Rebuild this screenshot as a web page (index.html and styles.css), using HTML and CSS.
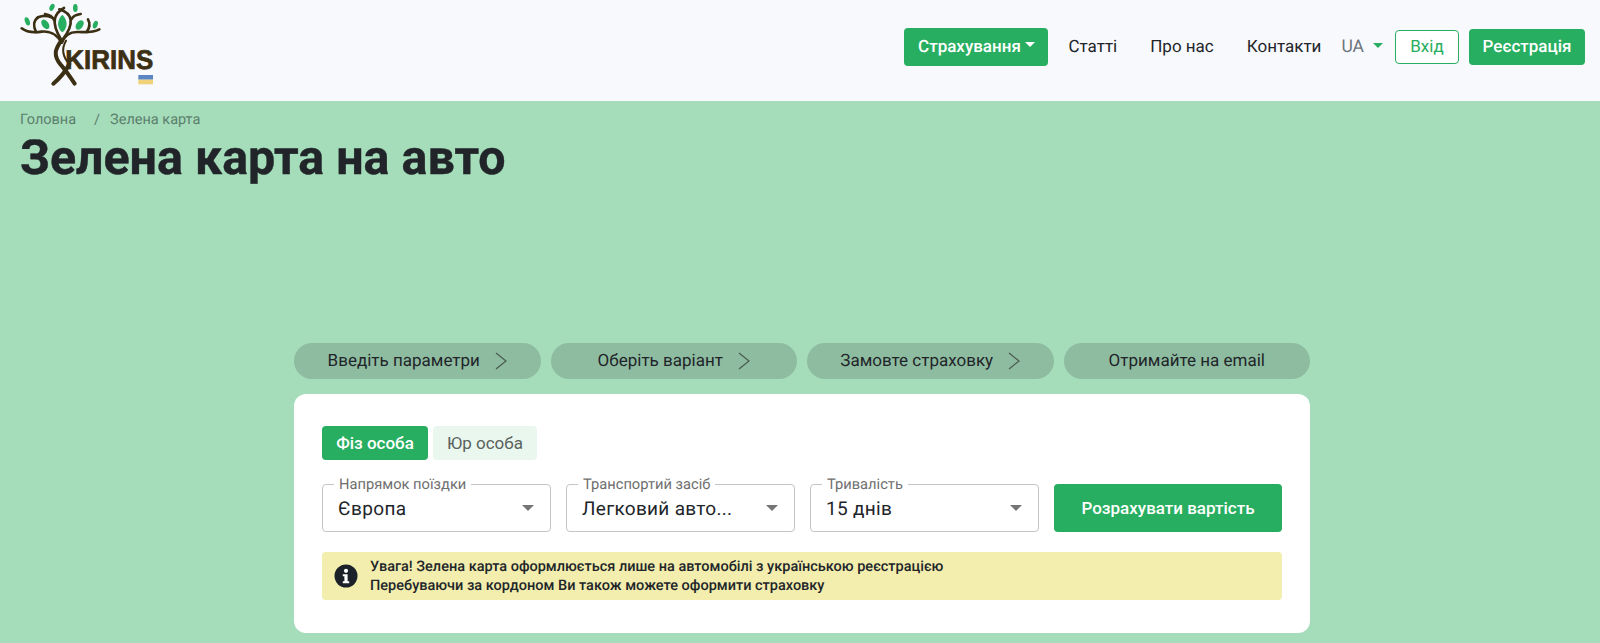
FILE: index.html
```html
<!DOCTYPE html>
<html lang="uk">
<head>
<meta charset="utf-8">
<title>Зелена карта на авто</title>
<link rel="stylesheet" href="styles.css">
</head>
<body>
<header class="site-header">
  <a class="brand" href="#" aria-label="Kirins">
    <svg class="logo" viewBox="0 0 450 285" width="150" height="95">
      <g class="logo-wood">
        <path d="M35 85C50 97 75 98 95 95C115 93 140 100 154 128"/>
        <path d="M268 88C250 98 225 97 205 96C185 95 165 102 156 128"/>
        <path d="M162 24C132 40 122 68 152 116"/>
        <path d="M148 28C188 40 194 70 160 116"/>
        <path d="M105 42C118 44 128 50 132 60"/>
        <path d="M212 42C198 44 188 50 184 58"/>
        <path d="M84 52C70 62 70 80 78 96"/>
        <path d="M234 58C242 72 238 85 230 96"/>
        <path d="M84 52C98 46 112 46 124 52"/>
        <path class="trunk" d="M154 122C134 148 130 168 152 194C168 212 180 230 194 251"/>
        <path class="trunk" d="M178 192C166 216 150 234 130 251"/>
        <path class="thin" d="M168 122C154 146 158 170 178 192"/>
      </g>
      <g class="logo-leaf">
        <path d="M157 44C174 60 174 84 157 97C140 84 140 60 157 44Z"/>
        <ellipse cx="106" cy="73" rx="10" ry="16" transform="rotate(-35 106 73)"/>
        <ellipse cx="209" cy="75" rx="10" ry="16" transform="rotate(35 209 75)"/>
        <ellipse cx="52" cy="64" rx="7" ry="13" transform="rotate(-20 52 64)"/>
        <ellipse cx="256" cy="74" rx="7" ry="12" transform="rotate(20 256 74)"/>
        <ellipse cx="126" cy="22" rx="7" ry="11" transform="rotate(25 126 22)"/>
        <ellipse cx="196" cy="24" rx="7" ry="12"/>
      </g>
      <text class="logo-text" x="166" y="208" textLength="264" lengthAdjust="spacingAndGlyphs">KIRINS</text>
      <rect class="flag-blue" x="385" y="225" width="44" height="14"/>
      <rect class="flag-yellow" x="385" y="239" width="44" height="14"/>
    </svg>
  </a>
  <nav class="nav">
    <a class="btn btn-green btn-menu" href="#">Страхування<span class="caret caret-white"></span></a>
    <a class="nav-link link-articles" href="#">Статті</a>
    <a class="nav-link link-about" href="#">Про нас</a>
    <a class="nav-link link-contacts" href="#">Контакти</a>
    <a class="lang" href="#">UA<span class="caret caret-green"></span></a>
    <a class="btn btn-outline" href="#">Вхід</a>
    <a class="btn btn-green btn-register" href="#">Реєстрація</a>
  </nav>
</header>
<main class="hero">
  <div class="crumbs"><span>Головна</span><span class="crumb-sep">/</span><span>Зелена карта</span></div>
  <h1 class="title">Зелена карта на авто</h1>
  <section class="calc">
    <ol class="steps">
      <li class="step">Введіть параметри<svg class="chev" viewBox="0 0 12 18" width="12" height="18"><path d="M1 1l10 8-10 8"/></svg></li>
      <li class="step">Оберіть варіант<svg class="chev" viewBox="0 0 12 18" width="12" height="18"><path d="M1 1l10 8-10 8"/></svg></li>
      <li class="step">Замовте страховку<svg class="chev" viewBox="0 0 12 18" width="12" height="18"><path d="M1 1l10 8-10 8"/></svg></li>
      <li class="step">Отримайте на email</li>
    </ol>
    <div class="card">
      <div class="tabs">
        <button class="tab tab-active">Фіз особа</button>
        <button class="tab">Юр особа</button>
      </div>
      <div class="form-row">
        <div class="field"><span class="field-label">Напрямок поїздки</span><span class="field-value">Європа</span><span class="field-caret"></span></div>
        <div class="field"><span class="field-label">Транспортий засіб</span><span class="field-value">Легковий авто...</span><span class="field-caret"></span></div>
        <div class="field"><span class="field-label">Тривалість</span><span class="field-value">15 днів</span><span class="field-caret"></span></div>
        <button class="submit">Розрахувати вартість</button>
      </div>
      <div class="notice">
        <svg class="notice-icon" viewBox="0 0 24 24" width="24" height="24"><circle cx="12" cy="12" r="11.5" fill="#1b2029"/><circle cx="12" cy="6.8" r="2.1" fill="#fff"/><path d="M8.8 10.3h4.8v7h1.6v2H8.8v-2h1.6v-5H8.8z" fill="#fff"/></svg>
        <p class="notice-text">Увага! Зелена карта оформлюється лише на автомобілі з українською реєстрацією<br>Перебуваючи за кордоном Ви також можете оформити страховку</p>
      </div>
    </div>
  </section>
</main>
</body>
</html>
```
FILE: styles.css
```css
* { box-sizing: border-box; }
html, body { margin: 0; height: 100%; }
body { background: #a5ddbb; font-family: Roboto, "Liberation Sans", sans-serif; color: #212529; overflow: hidden; text-rendering: geometricPrecision; }
a { text-decoration: none; color: inherit; }

.site-header { height: 101px; background: #f8f9fc; display: flex; justify-content: space-between; padding: 0 15px 0 10px; }
.brand { display: block; height: 95px; }
.logo { display: block; }
.logo-wood path { fill: none; stroke: #3b2f14; stroke-width: 8; stroke-linecap: round; }
.logo-wood .trunk { stroke-width: 12; }
.logo-wood .thin { stroke-width: 6; }
.logo-leaf { fill: #27ae60; }
.logo-text { font-family: "Liberation Sans", sans-serif; font-weight: 700; font-size: 81px; fill: #3b2f14; stroke: #3b2f14; stroke-width: 2; }
.flag-blue { fill: #5b86c4; }
.flag-yellow { fill: #efd27a; }

.nav { display: flex; align-items: center; height: 93px; font-size: 17px; }
.btn { display: flex; align-items: center; justify-content: center; border-radius: 4px; }
.btn-green { background: #27ae60; color: #fff; font-weight: 500; }
.btn-menu { width: 144px; height: 38px; }
.btn-register { width: 116px; height: 36px; margin-left: 10px; }
.btn-outline { width: 64px; height: 34px; margin-left: 12px; border: 1px solid #27ae60; background: #fff; color: #27ae60; }
.caret { display: inline-block; border-left: 5px solid transparent; border-right: 5px solid transparent; border-top: 5px solid; }
.caret-white { color: #fff; margin-left: 4px; margin-top: -5px; }
.caret-green { color: #27ae60; margin-left: 9px; margin-top: -2px; }
.nav-link { color: #212529; }
.link-articles { margin-left: 20px; }
.link-about { margin-left: 33px; }
.link-contacts { margin-left: 33px; }
.lang { display: flex; align-items: center; margin-left: 20px; color: #6c757d; font-size: 17.5px; }

.hero { padding-top: 10px; }
.crumbs { margin-left: 20px; display: flex; font-size: 14.5px; line-height: 18px; color: #5c7f6c; }
.crumb-sep { margin: 0 10px 0 18px; }
.title { margin: 0 0 0 20px; font-size: 48.4px; line-height: 57px; font-weight: 700; color: #212529; -webkit-text-stroke: 0.4px #212529; }

.calc { width: 1016px; margin: 157px 0 0 294px; }
.steps { list-style: none; margin: 0; padding: 0; display: flex; gap: 10px; }
.step { flex: 1; height: 36px; display: flex; align-items: center; justify-content: center; border-radius: 18px; background: #8ebca0; font-size: 17px; color: #212529; }
.chev { margin-left: 15px; }
.chev path { fill: none; stroke: #4a5a50; stroke-width: 1.2; }

.card { margin-top: 15px; height: 239px; background: #fff; border-radius: 12px; padding: 32px 28px 0; }
.tabs { display: flex; gap: 5px; }
.tab { height: 34px; padding: 0; border: 0; border-radius: 4px; font: inherit; font-size: 17px; background: #e9f7ef; color: #5a625d; width: 104px; }
.tab-active { background: #27ae60; color: #fff; font-weight: 500; width: 106px; }

.form-row { display: flex; gap: 15px; margin-top: 24px; }
.field { position: relative; flex: 0 0 229px; height: 48px; border: 1px solid #c4c4c4; border-radius: 4px; display: flex; align-items: center; padding-left: 15px; }
.field-label { position: absolute; top: -9px; left: 11px; padding: 0 5px; background: #fff; font-size: 14.7px; line-height: 16px; color: #6e6e6e; }
.field-value { font-size: 19px; letter-spacing: 0.3px; color: #212529; }
.field-caret { position: absolute; right: 16px; top: 20px; border-left: 6px solid transparent; border-right: 6px solid transparent; border-top: 6px solid #757575; }
.submit { flex: 0 0 228px; height: 48px; border: 0; border-radius: 4px; background: #27ae60; color: #fff; font: inherit; font-size: 17px; font-weight: 500; }

.notice { margin-top: 20px; height: 48px; background: #f3eeae; border-radius: 4px; display: flex; align-items: center; padding-left: 12px; }
.notice-icon { flex: none; }
.notice-text { margin: 0 0 0 12px; font-size: 14.5px; line-height: 19px; font-weight: 500; color: #212529; }
```
